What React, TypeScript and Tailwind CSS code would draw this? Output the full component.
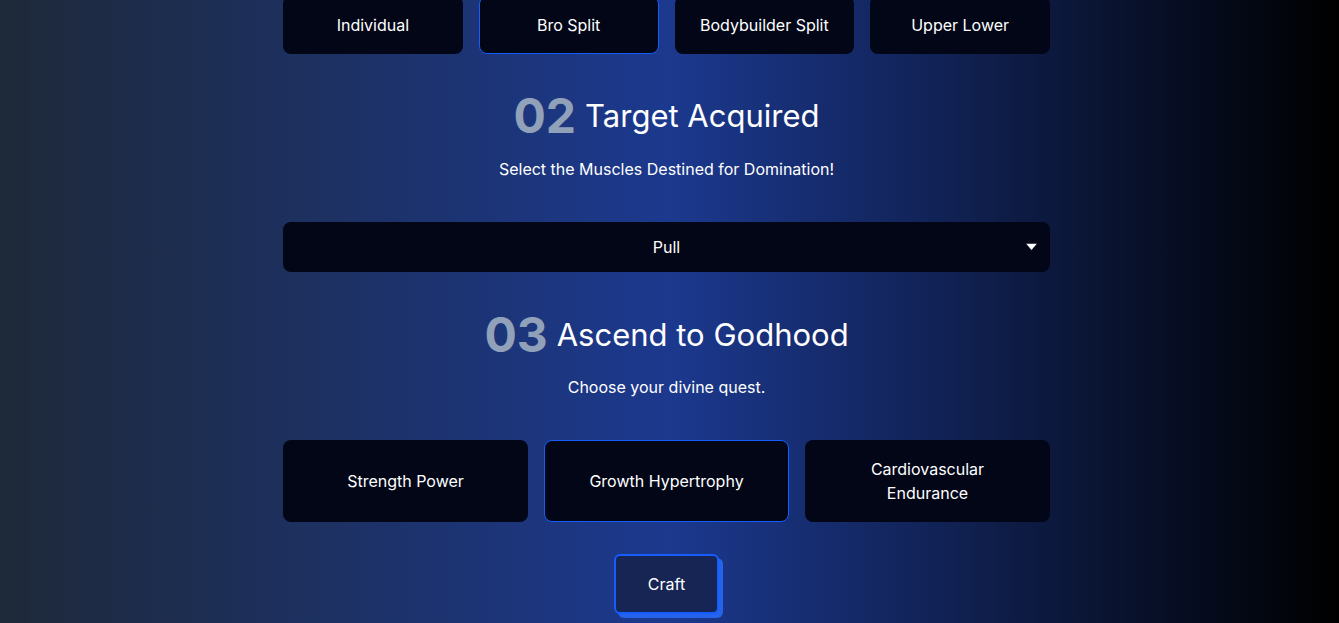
import { useState } from "react"

const splits = ["Individual", "Bro Split", "Bodybuilder Split", "Upper Lower"]
const goals = ["Strength Power", "Growth Hypertrophy", "Cardiovascular Endurance"]

function StepHeading({ num, title }: { num: string; title: string }) {
  return (
    <h2 className="flex items-center justify-center gap-[9px] leading-none">
      <span className="text-[48px] font-bold text-slate-400">{num}</span>
      <span className="pb-[2px] text-[31px] text-white">{title}</span>
    </h2>
  )
}

export default function App() {
  const [split, setSplit] = useState("Bro Split")
  const [goal, setGoal] = useState("Growth Hypertrophy")

  return (
    <main
      className="min-h-screen overflow-hidden bg-linear-to-r/srgb from-gray-800 via-blue-900 to-black text-white"
      style={{ fontFamily: "Inter, 'Noto Sans', sans-serif" }}
    >
      <div className="mx-auto w-[767px] -translate-x-[3px] pb-10">
        <div className="-mt-[4px] grid grid-cols-4 gap-4">
          {splits.map((s) => (
            <button
              key={s}
              onClick={() => setSplit(s)}
              className={`h-[58px] rounded-lg border bg-[#020617] text-base ${
                split === s ? "border-blue-600" : "border-transparent"
              }`}
            >
              {s}
            </button>
          ))}
        </div>

        <div className="mt-[38px]">
          <StepHeading num="02" title="Target Acquired" />
        </div>
        <p className="mt-[17px] text-center text-base leading-6">Select the Muscles Destined for Domination!</p>

        <div className="relative mt-[41px] flex h-[50px] items-center justify-center rounded-lg bg-[#020617] text-base">
          <span>Pull</span>
          <svg className="absolute right-[13px] top-1/2 -translate-y-1/2" width="11" height="7" viewBox="0 0 11 7">
            <path d="M0 0 L11 0 L5.5 6.5 Z" fill="white" />
          </svg>
        </div>

        <div className="mt-[39px]">
          <StepHeading num="03" title="Ascend to Godhood" />
        </div>
        <p className="mt-[16px] text-center text-base leading-6">Choose your divine quest.</p>

        <div className="mt-[41px] grid grid-cols-3 gap-4">
          {goals.map((g) => (
            <button
              key={g}
              onClick={() => setGoal(g)}
              className={`h-[82px] rounded-lg border bg-[#020617] px-8 text-base leading-6 ${
                goal === g ? "border-blue-600" : "border-transparent"
              }`}
            >
              {g}
            </button>
          ))}
        </div>

        <div className="mt-[32px] flex justify-center">
          <button className="rounded-md border-2 border-blue-600 bg-[#172554] px-8 py-4 text-base leading-6 shadow-[4px_4px_0_#2563eb]">
            Craft
          </button>
        </div>
      </div>
    </main>
  )
}
